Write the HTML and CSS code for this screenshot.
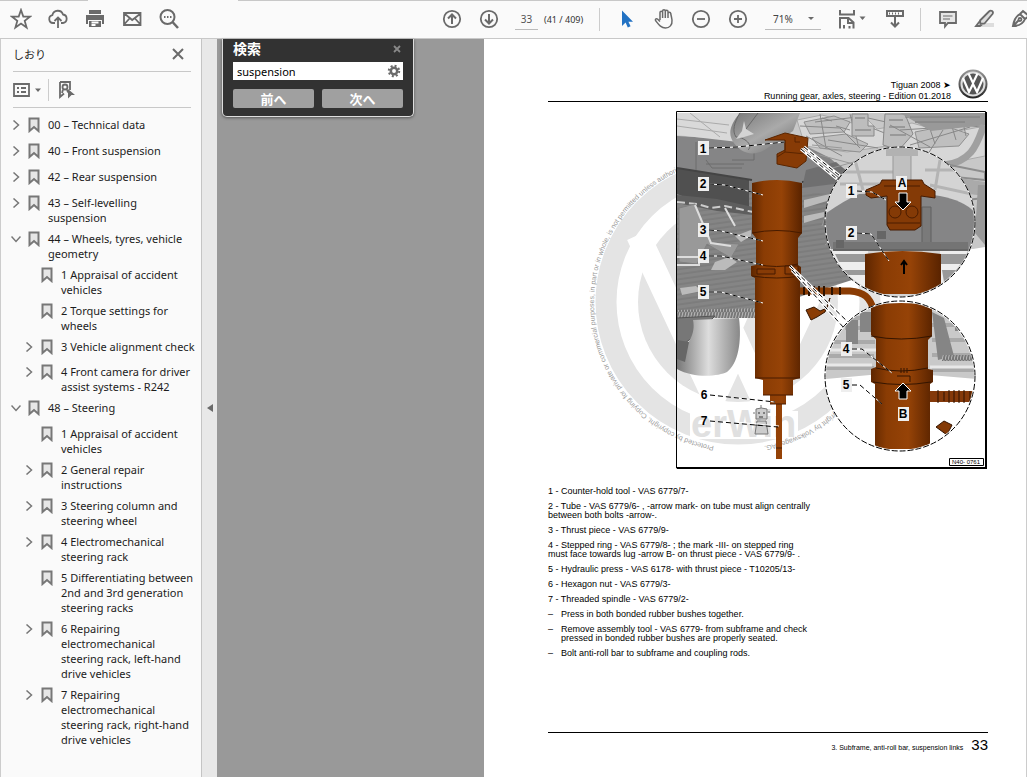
FILE: index.html
```html
<!DOCTYPE html>
<html lang="ja">
<head>
  <meta charset="UTF-8">
  <meta name="viewport" content="width=device-width, initial-scale=1.0">
  <title>Tiguan 2008 - Running gear, axles, steering</title>
  <link rel="stylesheet" href="styles.css">
</head>
<body>
  <svg class="defs" width="0" height="0" aria-hidden="true">
    <symbol id="bookmark" viewBox="0 0 12 16">
      <path d="M1.5 1.5h9v12.5l-4.500-4-4.500 4z" fill="#e6e6e6" stroke="#777" stroke-width="2"/>
    </symbol>
    <symbol id="right" viewBox="0 0 10 10">
      <path d="M2.500 0.500l5 4.500-5 4.500" fill="none" stroke="#777" stroke-width="1.500"/>
    </symbol>
    <symbol id="down" viewBox="0 0 10 10">
      <path d="M0.500 2.500l4.500 5 4.500-5" fill="none" stroke="#777" stroke-width="1.500"/>
    </symbol>
  </svg>

  <header class="toolbar">
    <div class="group">
      <button aria-label="Star"><svg width="22" height="22" viewBox="0 0 22 22"><path d="M11 2l2.300 6.500 6.700.2-5.300 4.200 1.900 6.600-5.600-3.900-5.600 3.900 1.900-6.600L2 8.700l6.700-.2z"/></svg></button>
      <button aria-label="Upload"><svg width="22" height="22" viewBox="0 0 22 22"><path d="M8 15H6a4 4 0 0 1-.6-7.900 5.500 5.500 0 0 1 10.600-.6A4.300 4.300 0 0 1 16 15h-2M11 20V10M7.500 13L11 9.500l3.500 3.500"/></svg></button>
      <button aria-label="Print"><svg width="22" height="22" viewBox="0 0 22 22"><path class="fill" d="M5 2h12v4H5zM2 7h18v9h-2v-4H4v4H2zM5 13h12v6H5z"/><path d="M7.500 14.500h7M7.500 17h4" stroke="#fff"/></svg></button>
      <button aria-label="Mail"><svg width="22" height="22" viewBox="0 0 22 22"><path d="M3 5h16.500v12H3zM4 6l7.200 6L19 6M3.500 16l5-5.500M19 16l-5-5.500"/></svg></button>
      <button aria-label="Find"><svg width="22" height="22" viewBox="0 0 22 22"><circle cx="9.500" cy="9" r="7" stroke-width="2"/><path d="M14.500 14l5.500 6" stroke-width="2.500"/><path d="M6 9h1.500M9 9h1.500M12 9h1.500" stroke-width="2"/></svg></button>
    </div>

    <div class="group pager">
      <button aria-label="Previous page"><svg width="20" height="20" viewBox="0 0 20 20"><circle cx="10" cy="10" r="8.200"/><path d="M10 15V6M6 9.500l4-4 4 4" stroke-width="2"/></svg></button>
      <button aria-label="Next page"><svg width="20" height="20" viewBox="0 0 20 20"><circle cx="10" cy="10" r="8.200"/><path d="M10 5v9M6 10.500l4 4 4-4" stroke-width="2"/></svg></button>
      <input class="page-number" type="text" value="33" aria-label="Page">
      <span class="page-count">(41 / 409)</span>
    </div>

    <div class="group tools">
      <button aria-label="Select"><svg width="20" height="20" viewBox="0 0 20 20"><path d="M5 1.500v15.500l3.600-3.400 2.200 5 2.800-1.300-2.200-4.600H16z" fill="#2272c3" stroke="none"/></svg></button>
      <button aria-label="Hand"><svg width="22" height="22" viewBox="0 0 22 22"><path d="M7 12V4.500a1.300 1.300 0 0 1 2.600 0V10 3a1.300 1.300 0 0 1 2.700 0v7V3.500a1.300 1.300 0 0 1 2.700 0V10 5.500a1.300 1.300 0 0 1 2.700 0C17.700 5.500 18.500 9 19 12c.5 5-2.500 8-6.500 8C8 20 6 17 2.500 12.500c-.5-1.500 1-2.200 2-1.500L7 13.500" stroke-width="1.500"/></svg></button>
      <button aria-label="Zoom out"><svg width="20" height="20" viewBox="0 0 20 20"><circle cx="10" cy="10" r="8.200"/><path d="M6 10h8"/></svg></button>
      <button aria-label="Zoom in"><svg width="20" height="20" viewBox="0 0 20 20"><circle cx="10" cy="10" r="8.200"/><path d="M6 10h8M10 6v8"/></svg></button>
      <span class="zoom"><select aria-label="Zoom"><option>71%</option></select></span>
      <button class="fit" aria-label="Fit width"><svg width="28" height="22" viewBox="0 0 28 22"><path d="M1 2v4.500h14V2M1 20.500V10h8.500l5 4.500v6M9 10v5h5M5 17v3.500M10.500 18v2.500" stroke-width="2"/><path class="fill" d="M20.500 8.500h6l-3 3.500z"/></svg></button>
      <button aria-label="Scroll mode"><svg width="20" height="22" viewBox="0 0 20 22"><path d="M2 3h16v5H2zM10 9v9M6 14.500l4 4 4-4" stroke-width="2"/><path d="M4 5.500h12" stroke-dasharray="1 2"/></svg></button>
    </div>

    <div class="group notes">
      <button aria-label="Comment"><svg width="20" height="20" viewBox="0 0 20 20"><path d="M2 3h16v11h-8l-3 3.500V14H2z" fill="#e6e6e6"/><path d="M5 7h9.500M5 10h7" stroke-width="1"/></svg></button>
      <button aria-label="Highlight"><svg width="22" height="20" viewBox="0 0 22 20"><path d="M9 14h11v4H7z" fill="#ddd" stroke="none"/><path d="M6 11.500l9-9c2-2 5 0 3.500 2.500l-8 9.500-4 .5zM5.500 12.500L2 17h4l2-1.500" fill="#ddd"/></svg></button>
      <button aria-label="Sign"><svg width="22" height="20" viewBox="0 0 22 20"><path d="M2 17c1-5 2-9 7-12l5 5c-2 5-7 7-12 7zM9 5l3-3 6 5-4 3M3 16l5-5" stroke-width="2"/><circle cx="9" cy="10.500" r="1.500"/></svg></button>
    </div>
  </header>

  <main class="workspace">
    <aside class="sidebar">
      <div class="side-title">
        <h2>しおり</h2>
        <button aria-label="Close"><svg width="12" height="12" viewBox="0 0 12 12"><path d="M1 1l10 10M11 1L1 11" stroke-width="2"/></svg></button>
      </div>
      <div class="side-tools">
        <button class="options" aria-label="Options"><svg width="28" height="16" viewBox="0 0 28 16"><path d="M1 2h15v12H1zM8 6h5M8 10h5"/><path class="fill" d="M4 5h2v2H4zM4 9h2v2H4zM22 6.500h6l-3 3.500z"/></svg></button>
        <button class="find-mark" aria-label="Find bookmark"><svg width="18" height="20" viewBox="0 0 18 20"><path d="M2 2h10v8M2 2v15l4-3.500"/><circle cx="7" cy="7" r="2.500"/><path d="M5 9.500L4 13M9 9.500l1 3"/><path class="fill" d="M10 9l7 6h-3.500l-3.500 3.500z"/></svg></button>
      </div>

      <ul class="tree">
        <li><div class="row"><button><svg><use href="#right"/></svg></button><svg class="mark"><use href="#bookmark"/></svg><a href="#">00 – Technical data</a></div></li>
        <li><div class="row"><button><svg><use href="#right"/></svg></button><svg class="mark"><use href="#bookmark"/></svg><a href="#">40 – Front suspension</a></div></li>
        <li><div class="row"><button><svg><use href="#right"/></svg></button><svg class="mark"><use href="#bookmark"/></svg><a href="#">42 – Rear suspension</a></div></li>
        <li><div class="row"><button><svg><use href="#right"/></svg></button><svg class="mark"><use href="#bookmark"/></svg><a href="#">43 – Self-levelling suspension</a></div></li>
        <li><div class="row"><button><svg><use href="#down"/></svg></button><svg class="mark"><use href="#bookmark"/></svg><a href="#">44 – Wheels, tyres, vehicle geometry</a></div>
          <ul>
            <li><div class="row leaf"><svg class="mark"><use href="#bookmark"/></svg><a href="#">1 Appraisal of accident vehicles</a></div></li>
            <li><div class="row leaf"><svg class="mark"><use href="#bookmark"/></svg><a href="#">2 Torque settings for wheels</a></div></li>
            <li><div class="row"><button><svg><use href="#right"/></svg></button><svg class="mark"><use href="#bookmark"/></svg><a href="#">3 Vehicle alignment check</a></div></li>
            <li><div class="row"><button><svg><use href="#right"/></svg></button><svg class="mark"><use href="#bookmark"/></svg><a href="#">4 Front camera for driver assist systems - R242</a></div></li>
          </ul>
        </li>
        <li><div class="row"><button><svg><use href="#down"/></svg></button><svg class="mark"><use href="#bookmark"/></svg><a href="#">48 – Steering</a></div>
          <ul>
            <li><div class="row leaf"><svg class="mark"><use href="#bookmark"/></svg><a href="#">1 Appraisal of accident vehicles</a></div></li>
            <li><div class="row"><button><svg><use href="#right"/></svg></button><svg class="mark"><use href="#bookmark"/></svg><a href="#">2 General repair instructions</a></div></li>
            <li><div class="row"><button><svg><use href="#right"/></svg></button><svg class="mark"><use href="#bookmark"/></svg><a href="#">3 Steering column and steering wheel</a></div></li>
            <li><div class="row"><button><svg><use href="#right"/></svg></button><svg class="mark"><use href="#bookmark"/></svg><a href="#">4 Electromechanical steering rack</a></div></li>
            <li><div class="row leaf"><svg class="mark"><use href="#bookmark"/></svg><a href="#">5 Differentiating between 2nd and 3rd generation steering racks</a></div></li>
            <li><div class="row"><button><svg><use href="#right"/></svg></button><svg class="mark"><use href="#bookmark"/></svg><a href="#">6 Repairing electromechanical steering rack, left-hand drive vehicles</a></div></li>
            <li><div class="row"><button><svg><use href="#right"/></svg></button><svg class="mark"><use href="#bookmark"/></svg><a href="#">7 Repairing electromechanical steering rack, right-hand drive vehicles</a></div></li>
          </ul>
        </li>
      </ul>
    </aside>

    <button class="gutter" aria-label="Collapse"><svg width="6" height="8" viewBox="0 0 6 8"><path class="fill" d="M6 0v8L0 4z"/></svg></button>

    <section class="document">
      <form class="search">
        <div class="search-head">
          <label for="query">検索</label>
          <button type="button" class="close" aria-label="Close"><svg width="8" height="8" viewBox="0 0 8 8"><path d="M1 1l6 6M7 1L1 7" stroke="#888"/></svg></button>
        </div>
        <div class="search-field">
          <input id="query" type="text" value="suspension">
          <button type="button" aria-label="Settings"><svg width="14" height="14" viewBox="0 0 14 14"><circle cx="7" cy="7" r="3.200" stroke-width="2.500"/><circle cx="7" cy="7" r="5.200" stroke-width="2" stroke-dasharray="2 2.080"/></svg></button>
        </div>
        <div class="search-nav">
          <button type="button">前へ</button>
          <button type="button">次へ</button>
        </div>
      </form>

      <article class="page">
        <header class="page-head">
          <p>Tiguan 2008 ➤<br>Running gear, axles, steering - Edition 01.2018</p>
          <svg width="30" height="30" viewBox="0 0 30 30">
            <defs><linearGradient id="chrome" x2="0" y2="1"><stop offset="0" stop-color="#999"/><stop offset="1" stop-color="#222"/></linearGradient></defs>
            <circle cx="15" cy="15" r="14.500" fill="url(#chrome)"/>
            <circle cx="15" cy="15" r="11.500" fill="#555" stroke="#ddd" stroke-width="2"/>
            <path d="M10.500 4.500L15 14l4.500-9.500M5 9l6 14 4-8 4 8 6-14" fill="none" stroke="#fff" stroke-width="2.200"/>
          </svg>
        </header>

        <svg class="figure" viewBox="584 108 404 364" role="img" aria-label="Assembly tool on subframe">
          <defs>
            <linearGradient id="rust"><stop offset="0" stop-color="#5e2600"/><stop offset=".25" stop-color="#8a3c04"/><stop offset=".6" stop-color="#964307"/><stop offset="1" stop-color="#592300"/></linearGradient>
            <linearGradient id="tyre"><stop offset="0" stop-color="#777"/><stop offset=".5" stop-color="#ddd"/><stop offset="1" stop-color="#888"/></linearGradient>
            <linearGradient id="pipe" x2="1" y2="1"><stop offset="0" stop-color="#777"/><stop offset=".5" stop-color="#aaa"/><stop offset="1" stop-color="#666"/></linearGradient>
            <pattern id="ribs" width="5" height="5" patternUnits="userSpaceOnUse" patternTransform="rotate(-8)"><rect width="5" height="5" fill="#858585"/><path d="M0 1h5" stroke="#747474"/></pattern>
            <pattern id="teeth" width="3" height="8" patternUnits="userSpaceOnUse"><rect width="3" height="8" fill="#777"/><path d="M0 8l2-8" stroke="#bbb"/></pattern>
            <clipPath id="frame"><rect x="677" y="113" width="308" height="354"/></clipPath>
            <clipPath id="lensA"><circle cx="900" cy="222" r="74"/></clipPath>
            <clipPath id="lensB"><circle cx="900" cy="376" r="74"/></clipPath>
            <path id="round" d="M714 446A145 145 0 1 1 764 446"/>
          </defs>

          <!-- watermark -->
          <g fill="none" stroke="#e4e4e4">
            <circle cx="738" cy="302" r="132" stroke-width="21"/>
            <circle cx="738" cy="302" r="100" fill="#e4e4e4" stroke="none"/>
            <path d="M690 200l48 110 48-110M638 235l76 162 24-52 24 52 76-162" stroke="#fff" stroke-width="24"/>
          </g>
          <path d="M690 411h108v28H690z" fill="#fff"/>
          <text class="brand" x="691" y="437">erWin</text>
          <text class="round"><textPath href="#round">Protected by copyright. Copying for private or commercial purposes, in part or in whole, is not permitted unless authorised by Volkswagen AG.</textPath></text>
          <text class="round end"><textPath href="#round" startOffset="100%">information in this document. Copyright by Volkswagen AG.</textPath></text>

          <g clip-path="url(#frame)">
            <!-- underbody -->
            <path d="M677 113h308v134l-12 2-90-10-80 45-40 30h-86z" fill="#c8c8c8"/>
            <path d="M677 190l80-6 70-4 45 22-20 78-50 16-40 14-85 2z" fill="url(#ribs)"/>
            <path d="M677 136l72 4 45 0 36 18 18 16-20 20-151-10z" fill="#858586"/>
            <path d="M677 168l72 12v30l-40-4-32-12z" fill="#505050"/>
            <path d="M677 168l75 12M802 182l28-2" fill="none" stroke="#444" stroke-width="2"/>
            <path d="M696 142v28M732 148h22v12h-22M706 164h38M706 160l6 8h30" fill="none" stroke="#6d6d6d"/>
            <path d="M806 170l30-8 12 10-14 12-32 4z" fill="#6f6f70"/>
            <path d="M677 195l40 4 36 8v8l-36-4-40-8z" fill="#5e5e5e"/>
            <path d="M677 202l20 2 14 4 14-2 28 6" fill="none" stroke="#ccc" stroke-width="2" stroke-dasharray="8 4"/>
            <path d="M679 208l16-4 16 38 28 2-8 14-24-14-10 20-18-2z" fill="#999" stroke="#808080"/>
            <path d="M695 205l16 38 20 3M725 208l10 18M677 257h22v8h-22" fill="none" stroke="#ddd" stroke-width="2"/>
            <path d="M715 262l14-5 8 5-12 8h-14zM680 288l16-2 6 5-20 4z" fill="#bbb"/>
            <path d="M735 236l16-6v6l-10 6zM804 200l26-6v6l-26 8zM804 216l20-4v5l-20 6z" fill="#bbb"/>
            <path d="M677 310l80-2v10h-80z" fill="url(#teeth)"/>
            <path d="M677 318l38-2-14 14-24 20z" fill="#777" stroke="#555"/>
            <path d="M693 320c3 14-5 26-16 32v17c18 10 42 7 50 3 11-8 15-30 12-54z" fill="url(#tyre)"/>
            <path d="M677 340l12 2-4 20-8-3z" fill="#666"/>

            <!-- engine parts -->
            <path d="M677 113h60l30 20-20 10-70-8z" fill="#d9d9d9"/>
            <path d="M677 119l52 6M677 126l50 7M690 113l30 24" stroke="#aaa"/>
            <path d="M797 120l25-5 30 8 15-4 10 10 35-6 36 10 37-7v30l-50 10-48-20-40 6-42-6z" fill="#d7d7d7" stroke="#aaa"/>
            <path d="M804 122l30-6 16 6-6 10-34 2zM812 138l34-4 22 10-8 8-40-4zM915 132l30-6 24 8-10 12-40 2z" fill="#bfbfbf" stroke="#909090"/>
            <path d="M800 126l40 2 20 20M820 114l6 34M815 122l42-5M850 114l8 30M828 140l50 8M806 136l36 20M868 118l18 4M872 128l20 8M836 126l14 4M822 118l10 3" fill="none" stroke="#888"/>
            <path d="M852 114h16v12h6v10h-22zM885 114h20l8 20-14 16-16-5z" fill="#bdbdbd" stroke="#888"/>
            <path d="M855 118h10M855 130h16M889 120h14M889 127h16M890 135h16" stroke="#999" stroke-width="2"/>
            <path d="M905 117l75 10M900 130l80-5M910 145l60-18M925 114l10 30M943 130l-15 24M890 125l40 22M950 120l6 20M962 118l4 18M915 122l20 2" fill="none" stroke="#888"/>
            <path d="M900 113h85v12l-54 6z" fill="#999"/>
            <path d="M910 117h70M915 122h50" stroke="#7d7d7d"/>
            <path d="M944 165c30-3 34-25 40-40" fill="none" stroke="#a0a0a0" stroke-width="7"/>
            <path d="M925 160l60 12v8l-40-4M950 180l35 5M965 200l20-2" fill="none" stroke="#8d8d8d" stroke-width="2"/>
            <path d="M960 178l25 4v14l-16-2z" fill="#aaa"/>
            <path d="M978 185h7v60l-10-12z" fill="#999"/>
            <path d="M740 113h60l-7 18-24 16c-10 8-20 8-28 3-12-9-16-20-1-37z" fill="url(#pipe)"/>
            <path d="M740 113c-6 10-8 18-4 24 8 0 18 8 12 13M758 113l-12 16-8 8" fill="none" stroke="#686868"/>
            <path d="M744 121l2 8 8 5-10 3-8 2 6-8z" fill="#d4d4d4"/>
            <path d="M812 145l30 3M812 153l45 12M825 170l36-10M835 190l-13 36M838 235l-13 10" stroke="#999"/>

            <!-- hose -->
            <path d="M800 291h50c14 1 20 6 24 20" fill="none" stroke="#8a3c04" stroke-width="7"/>
            <path d="M804 287v8M809 286v10M814 286v10M819 286v10M824 286v10M832 287v8M840 287v8" stroke="#2c1200" stroke-width="2"/>
            <path d="M806 310l8-3 6 4 7-3 3-10-5 14-8 5-6 3z" fill="#8a3c04" stroke="#341500"/>

            <!-- main tool -->
            <path d="M765 140l20-7 23 5-2 23-9 7-20-4v-10l8-4v-10z" fill="#873b06" stroke="#5a2500"/>
            <path d="M785 152l21 2M795 137v5h5M785 140v12l-8 5" fill="none" stroke="#5a2500"/>
            <path d="M752 183q25-6 50 0v50l-4 5v27l3 2v9l-1 2v100l-7 2v15h-7v9h-4v55h-6v-55h-6v-9h-7v-15l-8-2V278l-4-2v-10l5-1v-27l-4-5z" fill="url(#rust)"/>
            <path d="M752 233q25-5 50 0M756 264q20 5 42 0M752 276q25 4 49 0M755 378h45M763 395h30M770 404h16M776 448h6" fill="none" stroke="#461b00"/>
            <path d="M757 269h18v5h-18zM785 266h13v8h-13z" fill="#873b06" stroke="#461b00"/>

            <!-- robot -->
            <g fill="#ccc" stroke="#777">
              <path d="M756 409q5-2 11 0v10h-11zM757 421h9l2 13h-13zM761 408v-3M755 413h-2M768 412h2"/>
              <path d="M758 413h2M763 413h2M759 417h4M755 425h11" stroke="#333"/>
            </g>

            <!-- callout lines -->
            <path d="M804 147l36 29M801 149l36 30" stroke="#fff" stroke-width="3"/>
            <path d="M790 266l60 58M792 270l52 58" stroke="#fff" stroke-width="3"/>
            <path class="lead" d="M804 147l36 29M801 149l36 30M790 266l60 58M792 270l52 58"/>

            <!-- lens A -->
            <circle cx="900" cy="222" r="75" fill="#d4d4d4"/>
            <g clip-path="url(#lensA)">
              <path d="M835 172h60M840 184h40M925 170h40M930 185l46 10M940 160l-5 30M855 160l8 30" stroke="#b4b4b4" stroke-width="3"/>
              <path d="M893 150h18v30l-9 6-9-6z" fill="#c0c0c0" stroke="#999"/>
              <path d="M886 148h32v8h-32z" fill="#b2b2b2"/>
              <path d="M825 214q20-14 34-20l27-1h34l20 3q26 5 36 18v35H825z" fill="#858586"/>
              <path d="M922 207h9v40h-9z" fill="#7a7a7a" stroke="#606060"/>
              <path d="M833 242h135v9H833z" fill="#747474"/>
              <path d="M833 250h135" stroke="#555"/>
              <path d="M877 231h9v8h-9zM836 240h8v8h-8zM948 249l12 40 15-40z" fill="#666"/>
              <path d="M826 251h42v43h-42zM940 251h36v43h-36z" fill="#eee"/>
              <path d="M835 254h32v8h-28zM842 270h25v5h-22zM941 254h30v10h-30zM942 270h22v12h-20z" fill="#999"/>
              <path d="M866 190l14-6 2-4h40l2 4 11 7v7l-14-2v30l-6 4h-25l-3-5v-29l-16 2-5-3z" fill="#843a06" stroke="#461b00"/>
              <circle cx="895" cy="212" r="6" fill="none" stroke="#4b1d00"/><circle cx="912" cy="212" r="6" fill="none" stroke="#4b1d00"/>
              <path d="M887 223h33M884 186h36" stroke="#4b1d00"/>
              <path d="M865 254q37-6 76 0v40h-76z" fill="url(#rust)"/>
              <path d="M904 274v-12M901 265l3-4 3 4" fill="none" stroke="#000" stroke-width="2"/>
            </g>
            <circle class="lens-base" cx="900" cy="222" r="75"/>
            <circle class="lens" cx="900" cy="222" r="75"/>

            <!-- lens B -->
            <circle cx="900" cy="376" r="75" fill="#fff"/>
            <g clip-path="url(#lensB)">
              <path d="M825 303h151v76l-46-4h-60l-45 4z" fill="#c9c9c9"/>
              <path d="M845 328h30M830 342h45M826 356h48M826 368h48M930 325h46M932 340h40M932 355h45M840 318h34M932 370h44" stroke="#aaa" stroke-width="4"/>
              <path d="M846 320h12v24h-12zM860 312h12v20h-12zM932 312l12 6 10 38-16 4zM955 315h12v16h-12z" fill="#858585"/>
              <path d="M942 355h34v6h-34z" fill="url(#teeth)"/>
              <path d="M826 350h50M826 365h46M930 367h46" stroke="#e8e8e8" stroke-width="3"/>
              <path d="M930 391h46v11h-46z" fill="#84390a"/>
              <path d="M938 390v13M944 392v9M949 390v13M954 390v13M959 390v13M964 390v13M970 391v11" stroke="#2c1200"/>
              <path d="M936 427l8-6 8 4-5 10z" fill="#843a06" stroke="#341500"/>
              <path d="M871 306q30-6 61 0v30l-4 4v29l5 1v12l-3 2v65h-55v-65l-4-2v-13l5-2v-28l-5-4z" fill="url(#rust)"/>
              <path d="M871 336q30 6 61 0M876 368q24 6 52 0M873 382q28 5 58 0M901 368v5M904 368v5M907 368v5M897 376h13v6" fill="none" stroke="#341500"/>
            </g>
            <circle class="lens-base" cx="900" cy="376" r="75"/>
            <circle class="lens" cx="900" cy="376" r="75"/>

            <path class="arrow" d="M899 193h8v9h4l-8 8-8-8h4z"/>
            <path class="arrow" d="M899 399h8v-8h4l-8-8-8 8h4z"/>

            <path class="lead-base" d="M709 148l28-1 48-5M709 184l16 1 38 10M709 230l12 1 42 10M709 256l12 0 42 9M709 292l12 0 42 11M857 191l15 1 14 8M857 233l14 1 18 27M852 349l10 0 30 24M852 385l8 0 22 19M736 398l39 4M736 422l43 4"/>
            <path class="lead" d="M709 148l28-1 48-5M709 184l16 1 38 10M709 230l12 1 42 10M709 256l12 0 42 9M709 292l12 0 42 11M857 191l15 1 14 8M857 233l14 1 18 27M852 349l10 0 30 24M852 385l8 0 22 19M710 395l65 7M710 421l68 6"/>
            <path d="M698 141h11v14h-11zM698 177h11v14h-11zM698 223h11v14h-11zM698 249h11v14h-11zM698 285h11v14h-11zM846 184h11v14h-11zM846 226h11v14h-11zM896 176h11v14h-11zM841 342h11v14h-11zM841 378h11v14h-11zM898 407h11v14h-11z" fill="#eee"/>
            <g class="tag">
              <text x="703" y="153">1</text><text x="703" y="188">2</text><text x="703" y="234">3</text><text x="703" y="260">4</text><text x="703" y="296">5</text><text x="704" y="399">6</text><text x="704" y="425">7</text>
              <text x="851" y="195">1</text><text x="851" y="237">2</text><text x="902" y="187">A</text><text x="846" y="353">4</text><text x="846" y="389">5</text><text x="903" y="418">B</text>
            </g>
            <path d="M949.500 458.500h34v7h-34z" fill="#fff" stroke="#000"/>
            <text class="number" x="966" y="464">N40- 0761</text>
          </g>
          <path d="M676.500 111.500h309v356.500h-309z" fill="none" stroke="#000"/>
          <path d="M677 468h309V112" fill="none" stroke="#000" stroke-width="2"/>
        </svg>

        <div class="steps">
          <p>1 - Counter-hold tool - VAS 6779/7-</p>
          <p>2 - Tube - VAS 6779/6- , -arrow mark- on tube must align centrally between both bolts -arrow-.</p>
          <p>3 - Thrust piece - VAS 6779/9-</p>
          <p>4 - Stepped ring - VAS 6779/8- ; the mark -III- on stepped ring must face towards lug -arrow B- on thrust piece - VAS 6779/9- .</p>
          <p>5 - Hydraulic press - VAS 6178- with thrust piece - T10205/13-</p>
          <p>6 - Hexagon nut - VAS 6779/3-</p>
          <p>7 - Threaded spindle - VAS 6779/2-</p>
          <ul>
            <li>Press in both bonded rubber bushes together.</li>
            <li>Remove assembly tool - VAS 6779- from subframe and check pressed in bonded rubber bushes are properly seated.</li>
            <li>Bolt anti-roll bar to subframe and coupling rods.</li>
          </ul>
        </div>

        <footer class="page-foot">
          <span>3. Subframe, anti-roll bar, suspension links</span>
          <b>33</b>
        </footer>
      </article>
    </section>
  </main>
</body>
</html>
```
FILE: styles.css
```css
* {
  box-sizing: border-box;
}

body {
  margin: 0;
  min-height: 100vh;
  display: flex;
  flex-direction: column;
  overflow-x: hidden;
  font-family: "Noto Sans", "Noto Sans CJK JP", sans-serif;
  font-size: 11px;
  color: #222;
  background: #fafafa;
}

button {
  display: flex;
  align-items: center;
  justify-content: center;
  padding: 0;
  border: none;
  background: none;
  font: inherit;
}

button svg {
  fill: none;
  stroke: #6a6a6a;
  stroke-width: 1.8;
  flex: none;
}

.fill {
  fill: #6a6a6a;
  stroke: none;
}

.defs {
  position: absolute;
}

/* Toolbar */
.toolbar {
  display: flex;
  flex: none;
  height: 39px;
  overflow: hidden;
  border-bottom: 1px solid #c8c8c8;
  background: linear-gradient(90deg, #c8c8c8 88px, #fafafa 88px, #fafafa 238px, #c8c8c8 238px) top / 100% 1px no-repeat;
}

.group {
  display: flex;
  align-items: center;
  flex: none;
}

.group:first-child {
  padding-left: 2px;
}

.group button {
  width: 37px;
  height: 36px;
}

.pager {
  margin-left: 246px;
  padding-right: 16px;
}

.page-number {
  width: 23px;
  height: 22px;
  margin: 0 6px 0 8px;
  padding: 0;
  border: none;
  border-bottom: 1px solid #bbb;
  background: none;
  font: 10px "Noto Sans", sans-serif;
  text-align: center;
  color: #555;
}

.page-count {
  width: 39px;
  font-size: 9px;
  white-space: nowrap;
  color: #333;
}

.tools,
.notes {
  position: relative;
  padding-left: 9px;
}

.tools {
  padding-right: 7px;
}

.tools::before,
.notes::before {
  content: "";
  position: absolute;
  left: 0;
  top: 8px;
  height: 23px;
  border-left: 1px solid #ccc;
}

.zoom {
  position: relative;
  width: 56px;
  height: 22px;
  margin: 0 9px;
  border-bottom: 1px solid #bbb;
}

.zoom select {
  width: 100%;
  height: 21px;
  padding: 0 8px;
  border: none;
  background: none;
  appearance: none;
  font: 10px "Noto Sans", sans-serif;
  color: #444;
}

.zoom::after {
  content: "";
  position: absolute;
  right: 7px;
  top: 9px;
  border: 3px solid transparent;
  border-top-color: #6a6a6a;
}

.group .fit {
  margin: 0 5px 0 4px;
}

/* Sidebar */
.workspace {
  display: flex;
  flex: 1;
}

.sidebar {
  flex: none;
  width: 202px;
  border-left: 1px solid #ccc;
  border-right: 1px solid #c4c4c4;
}

.side-title,
.side-tools {
  display: flex;
  align-items: center;
  margin: 0 10px 0 12px;
  border-bottom: 1px solid #c8c8c8;
}

.side-title {
  height: 33px;
  padding-bottom: 2px;
  justify-content: space-between;
}

.side-title h2 {
  margin: 0;
  font-size: 11px;
  font-weight: normal;
}

.side-title button {
  margin-right: 7px;
}

.side-tools {
  height: 36px;
}

.find-mark {
  height: 22px;
  margin-left: 7px;
  padding-left: 9px;
  border-left: 1px solid #ccc;
}

.tree,
.tree ul {
  margin: 0;
  padding: 0;
  list-style: none;
}

.tree {
  padding: 9px 4px 0 10px;
}

.tree ul {
  padding-left: 13px;
}

.row {
  display: flex;
  align-items: flex-start;
  min-height: 26px;
  padding-bottom: 6px;
  line-height: 15px;
}

.tree ul .row {
  min-height: 25px;
}

.row button {
  width: 10px;
  height: 16px;
  margin-right: 7px;
}

.row button svg {
  width: 10px;
  height: 10px;
}

.row .mark {
  flex: none;
  width: 12px;
  height: 16px;
  margin-right: 8px;
}

.row.leaf {
  padding-left: 17px;
}

.row a {
  color: #1c1c1c;
  text-decoration: none;
}

.gutter {
  flex: none;
  width: 15px;
  background: #e8e8e8;
}

/* Document */
.document {
  position: relative;
  display: flex;
  flex: 1;
  background: #999;
}

.search {
  position: absolute;
  left: 5px;
  top: 0;
  width: 192px;
  padding: 0 10px 8px;
  background: #323232;
  border: solid #ddd;
  border-width: 0 1px 1px;
  border-radius: 0 0 5px 5px;
  box-shadow: 0 1px 3px #555;
}

.search-head {
  display: flex;
  align-items: center;
  justify-content: space-between;
  height: 23px;
  padding-bottom: 4px;
  color: #fff;
  font-size: 14px;
  font-weight: bold;
  line-height: 18px;
}

.close {
  margin-right: 2px;
}

.search-field {
  display: flex;
  height: 18px;
  padding: 0 2px 0 4px;
  background: #fff;
}

.search-field input {
  flex: 1;
  min-width: 0;
  padding: 0;
  border: none;
  font: 11px "Noto Sans", sans-serif;
}

.search-nav {
  display: flex;
  gap: 8px;
  margin-top: 9px;
}

.search-nav button {
  flex: 1;
  height: 19px;
  border-radius: 2px;
  background: #a0a0a0;
  color: #fff;
  font-size: 13px;
  font-weight: bold;
}

.page {
  display: flex;
  flex-direction: column;
  flex: 1;
  margin-left: 267px;
  padding: 30px 38px 25px 64px;
  border-right: 1px solid #ccc;
  background: #fff;
  font-family: "Liberation Sans", Arial, sans-serif;
  font-size: 9px;
  line-height: 9px;
  color: #000;
}

.page p {
  margin: 0;
}

.page-head {
  display: flex;
  justify-content: flex-end;
  gap: 7px;
  height: 33px;
  border-bottom: 1px solid #000;
  text-align: right;
  line-height: 11px;
}

.page-head p {
  padding-top: 11px;
}

.figure {
  width: 404px;
  margin: 6px 0 0 auto;
}

.brand {
  fill: #e0e0e0;
  font-size: 38px;
  font-weight: bold;
}

.round {
  fill: #999;
  font-size: 7px;
}

.end {
  text-anchor: end;
}

.lead-base,
.lens-base {
  fill: none;
  stroke: #fff;
}

.lead {
  fill: none;
  stroke: #000;
  stroke-dasharray: 5 3;
}

.lens {
  fill: none;
  stroke: #000;
  stroke-dasharray: 6 2;
}

.arrow {
  fill: #000;
  stroke: #fff;
}

.tag {
  font-size: 12px;
  font-weight: bold;
  text-anchor: middle;
}

.number {
  font-size: 6px;
  text-anchor: middle;
}

.steps {
  width: 266px;
  margin-top: 15px;
}

.steps p,
.steps li {
  margin-bottom: 6px;
}

.steps ul {
  margin: 0;
  padding: 0;
  list-style: none;
}

.steps li {
  position: relative;
  padding-left: 13px;
}

.steps li::before {
  content: "–";
  position: absolute;
  left: 0;
}

.page-foot {
  display: flex;
  justify-content: flex-end;
  align-items: baseline;
  gap: 8px;
  margin-top: auto;
  padding-top: 4px;
  border-top: 1px solid #000;
  font-size: 7px;
}

.page-foot b {
  font-size: 15px;
  font-weight: normal;
  line-height: 15px;
}
```
